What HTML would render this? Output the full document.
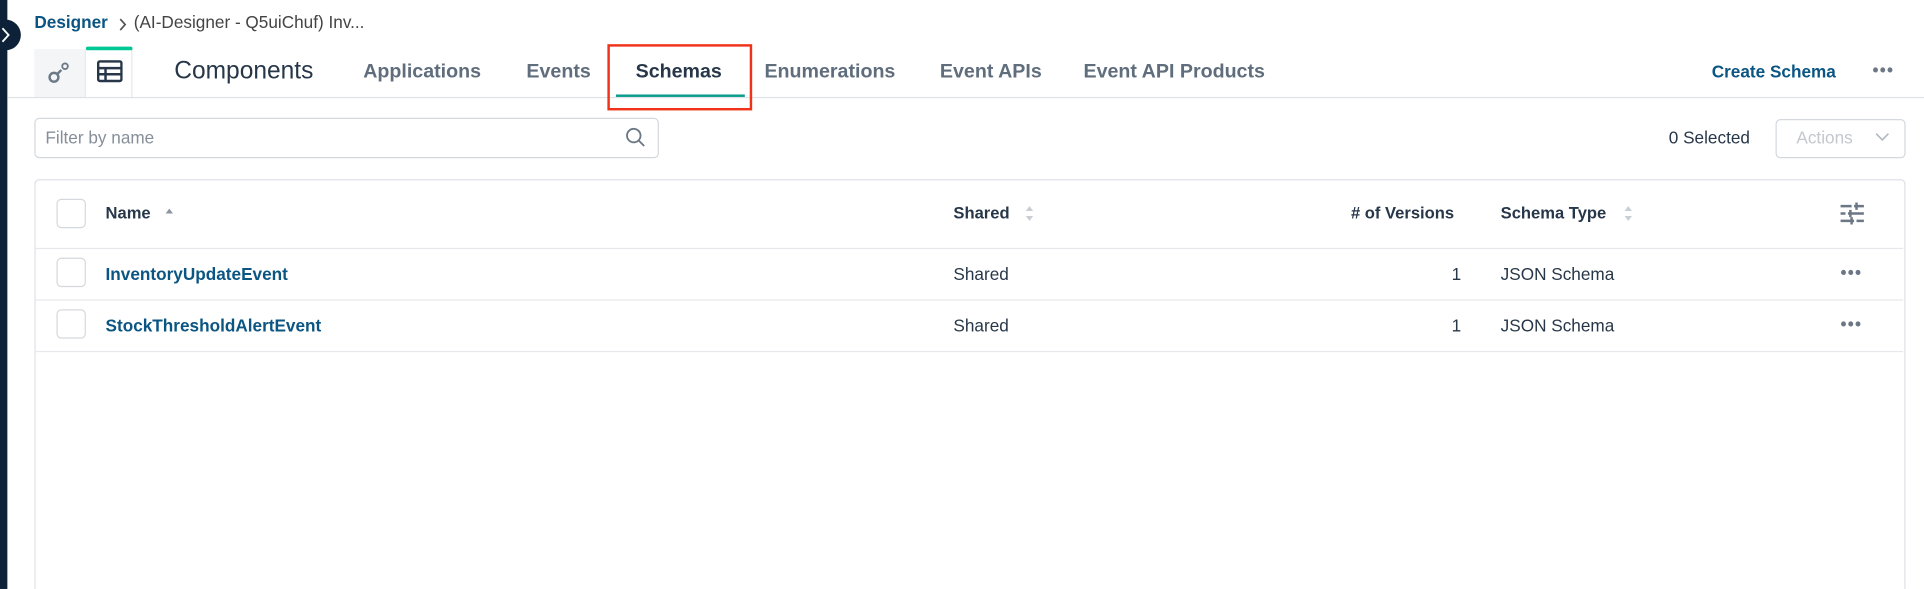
<!DOCTYPE html>
<html><head><meta charset="utf-8"><style>
html,body{margin:0;padding:0;width:1924px;height:589px;overflow:hidden;background:#fff}
#w{position:absolute;left:0;top:0;width:1568px;height:480px;overflow:hidden;transform:scale(1.22704);transform-origin:0 0;font-family:"Liberation Sans",sans-serif;color:#273749}
.a{position:absolute;white-space:nowrap}
.tab{position:absolute;top:49px;font-size:16px;font-weight:bold;color:#5f6d7c;line-height:20px}
.cb{position:absolute;left:46px;width:22px;height:22px;border:1px solid #d5d9de;border-radius:4px;background:#fff}
.hd{position:absolute;top:166px;font-size:13.5px;font-weight:bold;color:#273749}
.cell{position:absolute;font-size:14px;color:#273749}
.lnk{position:absolute;font-size:14px;font-weight:bold;color:#0b5583}
.dots{position:absolute;font-size:14px;color:#6b7785;letter-spacing:1px;font-weight:bold}
</style></head><body><div id="w">
<div class="a" style="left:0;top:0;width:6px;height:480px;background:#0d2238"></div>
<div class="a" style="left:-8px;top:16px;width:25px;height:25px;border-radius:50%;background:#0d2238"></div>
<svg class="a" style="left:0;top:21px" width="10" height="15"><path d="M2 2 L7 7.5 L2 13" stroke="#fff" stroke-width="1.5" fill="none"/></svg>

<div class="a" style="left:28px;top:10px;font-size:14px;font-weight:bold;color:#0b5583">Designer</div>
<svg class="a" style="left:95px;top:14px" width="10" height="12"><path d="M3 1.5 L7 6 L3 10.5" stroke="#555" stroke-width="1.4" fill="none"/></svg>
<div class="a" style="left:109px;top:10px;font-size:14px;color:#444">(AI-Designer - Q5uiChuf) Inv...</div>

<div class="a" style="left:28px;top:40px;width:41px;height:40px;background:#f4f5f7"></div>
<svg class="a" style="left:37px;top:48px" width="22" height="22"><circle cx="7" cy="15" r="3.6" stroke="#6d7987" stroke-width="2" fill="none"/><line x1="9.5" y1="12.5" x2="13" y2="9" stroke="#6d7987" stroke-width="2"/><circle cx="16" cy="6" r="2.3" stroke="#6d7987" stroke-width="1.5" fill="none"/></svg>
<div class="a" style="left:69px;top:40px;width:39px;height:40px;background:#fff;border-left:1px solid #e6e8eb;border-right:1px solid #e6e8eb;box-sizing:border-box"></div>
<div class="a" style="left:70px;top:38px;width:38px;height:3px;background:#00c895;border-radius:2px"></div>
<svg class="a" style="left:79px;top:49px" width="21" height="19"><rect x="1" y="1" width="19" height="16" rx="1.5" stroke="#273749" stroke-width="2" fill="none"/><line x1="1" y1="6.5" x2="20" y2="6.5" stroke="#273749" stroke-width="2"/><line x1="1" y1="11.5" x2="20" y2="11.5" stroke="#273749" stroke-width="2"/><line x1="7" y1="6" x2="7" y2="17" stroke="#273749" stroke-width="2"/></svg>

<div class="a" style="left:142px;top:47px;font-size:20px;color:#273749">Components</div>
<div class="tab" style="left:296px">Applications</div>
<div class="tab" style="left:429px">Events</div>
<div class="tab" style="left:518px;color:#273749">Schemas</div>
<div class="tab" style="left:623px">Enumerations</div>
<div class="tab" style="left:766px">Event APIs</div>
<div class="tab" style="left:883px">Event API Products</div>
<div class="a" style="left:6px;top:79px;width:1562px;height:1px;background:#dfe2e6"></div>
<div class="a" style="left:502px;top:77px;width:105px;height:2px;background:#0a9c8c"></div>
<div class="a" style="left:495px;top:36px;width:114px;height:50px;border:2.5px solid #f0321a"></div>
<div class="a" style="left:1395px;top:50px;font-size:14px;font-weight:bold;color:#0b5583">Create Schema</div>
<div class="dots" style="left:1526px;top:49px">•••</div>

<div class="a" style="left:28px;top:96px;width:507px;height:31px;border:1px solid #d5d9de;border-radius:4px"></div>
<div class="a" style="left:37px;top:104px;font-size:14px;color:#868f99">Filter by name</div>
<svg class="a" style="left:509px;top:103px" width="18" height="18"><circle cx="7.5" cy="7.5" r="5.5" stroke="#6b7785" stroke-width="1.5" fill="none"/><line x1="11.5" y1="11.5" x2="16" y2="16" stroke="#6b7785" stroke-width="1.5"/></svg>
<div class="a" style="left:1360px;top:104px;font-size:14px;color:#273749">0 Selected</div>
<div class="a" style="left:1447px;top:97px;width:104px;height:30px;border:1px solid #d5d9de;border-radius:4px"></div>
<div class="a" style="left:1464px;top:104px;font-size:14px;color:#c2c8ce">Actions</div>
<svg class="a" style="left:1528px;top:107px" width="12" height="10"><path d="M1 2 L6 7 L11 2" stroke="#b0b7bf" stroke-width="1.3" fill="none"/></svg>

<div class="a" style="left:28px;top:146px;width:1523px;height:333px;border:1px solid #dcdfe3;border-bottom:none;border-radius:4px 4px 0 0"></div>
<div class="cb" style="top:162px"></div>
<div class="hd" style="left:86px">Name</div>
<svg class="a" style="left:134px;top:169px" width="8" height="6"><path d="M1 5 L4 1 L7 5Z" fill="#8a95a1"/></svg>
<div class="hd" style="left:777px">Shared</div>
<svg class="a" style="left:835px;top:167px" width="8" height="14"><path d="M1 5 L4 1 L7 5Z M1 9 L4 13 L7 9Z" fill="#c9ced4"/></svg>
<div class="hd" style="left:1101px">#&nbsp;of Versions</div>
<div class="hd" style="left:1223px">Schema Type</div>
<svg class="a" style="left:1323px;top:167px" width="8" height="14"><path d="M1 5 L4 1 L7 5Z M1 9 L4 13 L7 9Z" fill="#c9ced4"/></svg>
<svg class="a" style="left:1499px;top:165px" width="22" height="18"><g stroke="#6b7785" stroke-width="2"><line x1="1" y1="3" x2="20" y2="3"/><line x1="1" y1="9" x2="20" y2="9"/><line x1="1" y1="15" x2="20" y2="15"/></g><g fill="#fff"><rect x="10" y="1" width="2" height="4"/><rect x="5" y="7" width="2" height="4"/><rect x="12" y="13" width="2" height="4"/></g><g stroke="#6b7785" stroke-width="2"><line x1="14" y1="0" x2="14" y2="6"/><line x1="9" y1="6" x2="9" y2="12"/><line x1="10" y1="12" x2="10" y2="18"/></g></svg>
<div class="a" style="left:29px;top:202px;width:1522px;height:1px;background:#e6e8eb"></div>

<div class="cb" style="top:210px"></div>
<div class="lnk" style="left:86px;top:215px">InventoryUpdateEvent</div>
<div class="cell" style="left:777px;top:215px">Shared</div>
<div class="cell" style="left:1183px;top:215px">1</div>
<div class="cell" style="left:1223px;top:215px">JSON Schema</div>
<div class="dots" style="left:1500px;top:214px">•••</div>
<div class="a" style="left:29px;top:244px;width:1522px;height:1px;background:#e6e8eb"></div>

<div class="cb" style="top:252px"></div>
<div class="lnk" style="left:86px;top:257px">StockThresholdAlertEvent</div>
<div class="cell" style="left:777px;top:257px">Shared</div>
<div class="cell" style="left:1183px;top:257px">1</div>
<div class="cell" style="left:1223px;top:257px">JSON Schema</div>
<div class="dots" style="left:1500px;top:256px">•••</div>
<div class="a" style="left:29px;top:286px;width:1522px;height:1px;background:#e6e8eb"></div>
</div></body></html>
